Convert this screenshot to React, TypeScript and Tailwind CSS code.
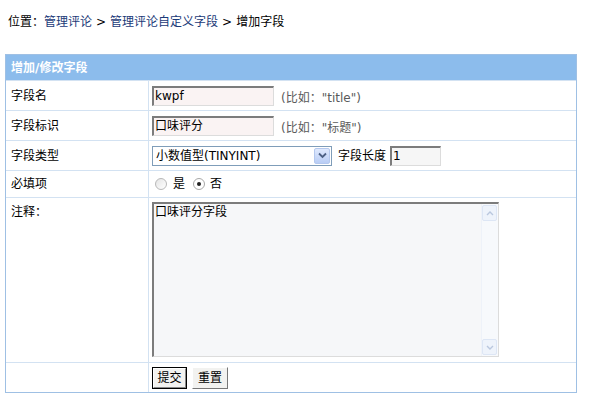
export default function App() {
  const font = "font-['DejaVu_Sans','Noto_Sans_CJK_SC',sans-serif]";
  const inset =
    "border-t-2 border-l-2 border-r border-b border-t-[#7c7c7c] border-l-[#7c7c7c] border-r-[#dcdcdc] border-b-[#dcdcdc]";

  return (
    <div className={`w-[589px] h-[407px] bg-white text-[12px] text-black ${font}`}>
      {/* breadcrumb */}
      <div className="pt-[14px] pl-[8px] leading-[16px]">
        位置：<span className="text-[#1b3a78]">管理评论</span>
        <span className="mx-[4px]">&gt;</span>
        <span className="text-[#1b3a78]">管理评论自定义字段</span>
        <span className="mx-[4px]">&gt;</span>
        增加字段
      </div>

      <div className="mt-[24px] ml-[5px] w-[572px] border border-[#9fc0e4]">
        <div className="h-[25px] bg-[#8cbcec] pl-[5px] flex items-center text-white font-bold">
          增加/修改字段
        </div>

        <div className="grid grid-cols-[143px_1fr]">
          {/* 字段名 */}
          <div className="h-[30px] border-t border-r border-[#d3e2f2] pl-[5px] flex items-center">字段名</div>
          <div className="h-[30px] border-t border-[#d3e2f2] pl-[3px] flex items-center">
            <div className={`w-[122px] h-[20px] bg-[#faf3f3] ${inset} pl-[1px] leading-[16px]`}>kwpf</div>
            <span className="ml-[7px] mt-[4px] text-[#5a5a5a]">(比如："title")</span>
          </div>

          {/* 字段标识 */}
          <div className="h-[30px] border-t border-r border-[#d3e2f2] pl-[5px] flex items-center">字段标识</div>
          <div className="h-[30px] border-t border-[#d3e2f2] pl-[3px] flex items-center">
            <div className={`w-[122px] h-[20px] bg-[#faf3f3] ${inset} pl-[1px] leading-[16px]`}>口味评分</div>
            <span className="ml-[7px] mt-[4px] text-[#5a5a5a]">(比如："标题")</span>
          </div>

          {/* 字段类型 */}
          <div className="h-[30px] border-t border-r border-[#d3e2f2] pl-[5px] flex items-center">字段类型</div>
          <div className="h-[30px] border-t border-[#d3e2f2] pl-[3px] flex items-center">
            <div className="w-[180px] h-[20px] border border-[#7f9db9] bg-white flex items-center">
              <span className="flex-1 pl-[3px] leading-[16px]">小数值型(TINYINT)</span>
              <span className="w-[16px] h-[16px] mr-[1px] rounded-[2px] border border-[#b4c8ee] bg-gradient-to-b from-[#dfe9fd] to-[#b9cdf5] flex items-center justify-center">
                <svg width="9" height="7" viewBox="0 0 9 7">
                  <path d="M1 1.5 L4.5 5 L8 1.5" fill="none" stroke="#4d6185" strokeWidth="1.8" />
                </svg>
              </span>
            </div>
            <span className="ml-[6px]">字段长度</span>
            <div className={`ml-[4px] w-[51px] h-[20px] bg-[#f6f6f6] ${inset} pl-[1px] leading-[16px]`}>1</div>
          </div>

          {/* 必填项 */}
          <div className="h-[27px] border-t border-r border-[#d3e2f2] pl-[5px] flex items-center">必填项</div>
          <div className="h-[27px] border-t border-[#d3e2f2] pl-[5px] flex items-center">
            <span className="ml-[1px] w-[12px] h-[12px] rounded-full border border-[#b8b8b8] bg-gradient-to-br from-[#e4e4e4] to-white" />
            <span className="ml-[6px]">是</span>
            <span className="ml-[8px] w-[12px] h-[12px] rounded-full border border-[#a8a8a8] bg-white flex items-center justify-center">
              <span className="w-[4px] h-[4px] rounded-full bg-[#222]" />
            </span>
            <span className="ml-[5px]">否</span>
          </div>

          {/* 注释 */}
          <div className="h-[165px] border-t border-r border-[#d3e2f2] pl-[5px] pt-[5px]">注释：</div>
          <div className="h-[165px] border-t border-[#d3e2f2] pl-[3px] pt-[4px]">
            <div className={`w-[347px] h-[155px] bg-[#f6f7f9] ${inset} flex`}>
              <div className="flex-1 pl-[1px] leading-[16px]">口味评分字段</div>
              <div className="w-[17px] flex flex-col justify-between border-l border-[#eef2f9] bg-[#f7f9fc] py-[1px] pr-[1px]">
                <span className="h-[16px] rounded-[2px] border border-[#dde6f5] bg-[#eef3fb] flex items-center justify-center">
                  <svg width="8" height="5" viewBox="0 0 8 5">
                    <path d="M1 4 L4 1 L7 4" fill="none" stroke="#b9c7de" strokeWidth="1.4" />
                  </svg>
                </span>
                <span className="h-[16px] rounded-[2px] border border-[#dde6f5] bg-[#eef3fb] flex items-center justify-center">
                  <svg width="8" height="5" viewBox="0 0 8 5">
                    <path d="M1 1 L4 4 L7 1" fill="none" stroke="#b9c7de" strokeWidth="1.4" />
                  </svg>
                </span>
              </div>
            </div>
          </div>

          {/* buttons */}
          <div className="h-[30px] border-t border-r border-[#d3e2f2]" />
          <div className="h-[30px] border-t border-[#d3e2f2] pl-[3px] flex items-center gap-[5px]">
            <div className="w-[35px] h-[22px] border border-black">
              <div className="w-full h-full border border-t-white border-l-white border-r-[#888] border-b-[#888] bg-[#f2f2f0] flex items-center justify-center leading-[16px]">
                提交
              </div>
            </div>
            <div className="w-[36px] h-[22px] border border-t-white border-l-white border-r-[#777] border-b-[#777] bg-[#f2f2f0] flex items-center justify-center leading-[16px]">
              重置
            </div>
          </div>
        </div>
      </div>
    </div>
  );
}
